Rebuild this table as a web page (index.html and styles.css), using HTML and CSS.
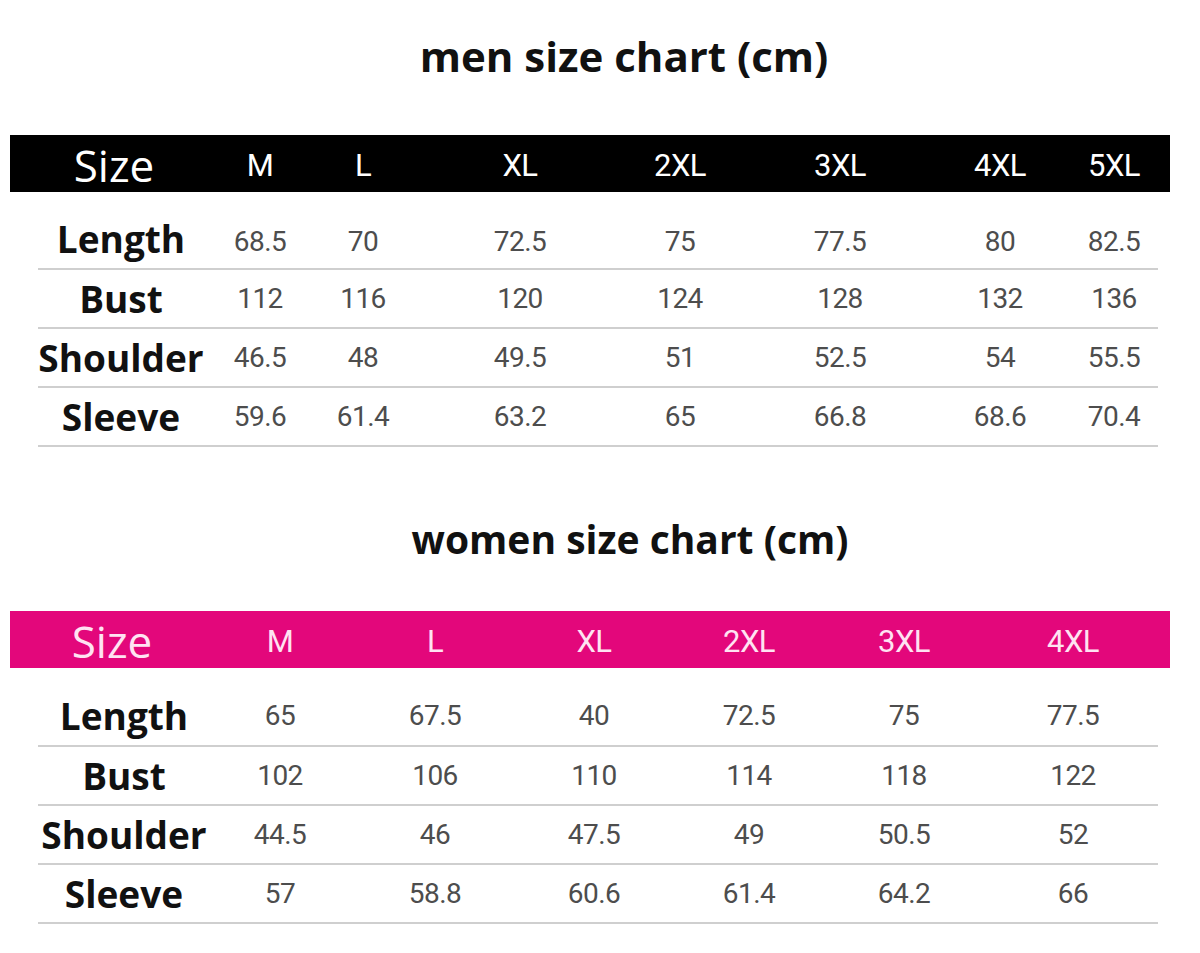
FILE: index.html
```html
<!DOCTYPE html>
<html>
<head>
<meta charset="utf-8">
<link rel="stylesheet" href="styles.css">
</head>
<body>
<section class="chart chart-men">
  <h1 class="title">men size chart (cm)</h1>
  <div class="table">
    <div class="row head">
      <div class="cell label">Size</div>
      <div class="cell">M</div><div class="cell">L</div><div class="cell">XL</div><div class="cell">2XL</div><div class="cell">3XL</div><div class="cell">4XL</div><div class="cell last">5XL</div>
    </div>
    <div class="row first">
      <div class="cell label">Length</div>
      <div class="cell">68.5</div><div class="cell">70</div><div class="cell">72.5</div><div class="cell">75</div><div class="cell">77.5</div><div class="cell">80</div><div class="cell last">82.5</div>
    </div>
    <div class="row">
      <div class="cell label">Bust</div>
      <div class="cell">112</div><div class="cell">116</div><div class="cell">120</div><div class="cell">124</div><div class="cell">128</div><div class="cell">132</div><div class="cell last">136</div>
    </div>
    <div class="row">
      <div class="cell label">Shoulder</div>
      <div class="cell">46.5</div><div class="cell">48</div><div class="cell">49.5</div><div class="cell">51</div><div class="cell">52.5</div><div class="cell">54</div><div class="cell last">55.5</div>
    </div>
    <div class="row">
      <div class="cell label">Sleeve</div>
      <div class="cell">59.6</div><div class="cell">61.4</div><div class="cell">63.2</div><div class="cell">65</div><div class="cell">66.8</div><div class="cell">68.6</div><div class="cell last">70.4</div>
    </div>
  </div>
</section>

<section class="chart chart-women">
  <h1 class="title">women size chart (cm)</h1>
  <div class="table">
    <div class="row head">
      <div class="cell label">Size</div>
      <div class="cell">M</div><div class="cell">L</div><div class="cell">XL</div><div class="cell">2XL</div><div class="cell">3XL</div><div class="cell">4XL</div>
    </div>
    <div class="row first">
      <div class="cell label">Length</div>
      <div class="cell">65</div><div class="cell">67.5</div><div class="cell">40</div><div class="cell">72.5</div><div class="cell">75</div><div class="cell">77.5</div>
    </div>
    <div class="row">
      <div class="cell label">Bust</div>
      <div class="cell">102</div><div class="cell">106</div><div class="cell">110</div><div class="cell">114</div><div class="cell">118</div><div class="cell">122</div>
    </div>
    <div class="row">
      <div class="cell label">Shoulder</div>
      <div class="cell">44.5</div><div class="cell">46</div><div class="cell">47.5</div><div class="cell">49</div><div class="cell">50.5</div><div class="cell">52</div>
    </div>
    <div class="row">
      <div class="cell label">Sleeve</div>
      <div class="cell">57</div><div class="cell">58.8</div><div class="cell">60.6</div><div class="cell">61.4</div><div class="cell">64.2</div><div class="cell">66</div>
    </div>
  </div>
</section>
</body>
</html>
```
FILE: styles.css
```css
html, body {
  margin: 0;
  padding: 0;
  background: #ffffff;
}

body {
  width: 1200px;
  font-family: "Open Sans", "Liberation Sans", sans-serif;
}

.chart {
  display: flex;
  flex-direction: column;
}

.chart-men {
  padding-top: 30px;
}

.chart-women {
  padding-top: 66px;
}

.title {
  margin: 0;
  height: 52px;
  line-height: 52px;
  font-weight: 700;
  color: #111;
  text-align: center;
}

.chart-men .title {
  font-size: 42px;
  margin-left: 48px;
  margin-bottom: 53px;
}

.chart-women .title {
  font-size: 39px;
  margin-left: 60px;
  margin-bottom: 46px;
}

.table {
  margin: 0 42px 0 38px;
  display: flex;
  flex-direction: column;
}

.row {
  display: grid;
  align-items: center;
  justify-items: center;
  height: 57px;
  border-bottom: 2px solid #cfcfcf;
}

.chart-men .row {
  grid-template-columns: 166px 112px 94px 220px 100px 220px 100px 1fr;
}

.chart-women .row {
  grid-template-columns: 162px 160px 150px 168px 142px 168px 1fr;
}

.row.first {
  height: 59px;
  padding-top: 17px;
}

.chart-women .row.first {
  height: 60px;
}

.row.head {
  height: 57px;
  margin: 0 -12px 0 -28px;
  padding: 0 12px 0 28px;
  border-bottom: none;
  color: #ffffff;
}

.chart-men .row.head {
  background: #000000;
}

.chart-women .row.head {
  background: #e3077b;
  color: #ffe3f2;
}

.cell {
  font-family: "Roboto", "Liberation Sans", sans-serif;
  font-size: 28px;
  color: #4d4d4d;
  letter-spacing: -0.5px;
}

.chart-men .row.first .cell {
  padding-top: 6px;
}

.chart-men .row.first .cell.label {
  padding-top: 0;
}

.cell.last {
  padding-left: 20px;
}

.cell.label {
  font-family: "Open Sans", "Liberation Sans", sans-serif;
  font-weight: 700;
  font-size: 37px;
  color: #111;
  letter-spacing: 0;
}

.chart-women .cell.label {
  padding-left: 10px;
}

.row.head .cell {
  color: inherit;
  font-size: 31px;
}

.row.head .cell.label {
  font-weight: 400;
  font-size: 44px;
  margin-left: -14px;
  padding-left: 0;
}
```
